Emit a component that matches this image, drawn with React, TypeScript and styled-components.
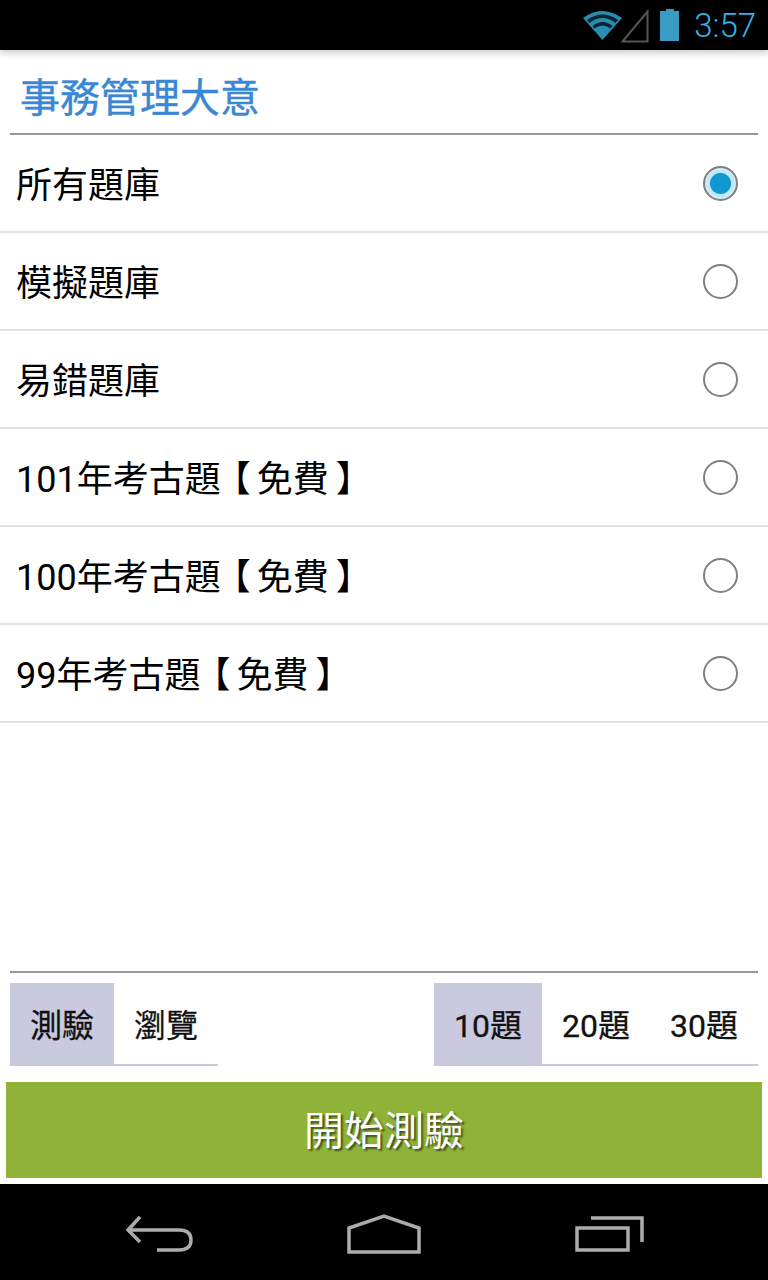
import styled, { createGlobalStyle } from 'styled-components';

const GlobalStyle = createGlobalStyle`
  html, body {
    margin: 0;
    padding: 0;
    background-color: #000;
  }

  * {
    box-sizing: border-box;
  }
`;

const BANKS = [
  { name: '所有題庫' },
  { name: '模擬題庫' },
  { name: '易錯題庫' },
  { name: '101年考古題', free: true },
  { name: '100年考古題', free: true },
  { name: '99年考古題', free: true },
];
const FONT = `Roboto, "Noto Sans CJK TC", sans-serif`;

const App = () => {
  return (
    <>
      <GlobalStyle />
      <Screen>
        <StatusBar>
          <svg width="40" height="32" viewBox="0 0 40 32">
            <path d="M0 9 Q19 -5 39 9 L19.500 31Z" fill="#2a8cb0" />
            <path d="M4 11 Q19.500 0 35 11 L32.500 14 Q19.500 4 6.500 14Z" fill="#000" opacity=".75" />
            <path d="M9.500 17 Q19.500 9 29.500 17 L27.500 19.500 Q19.500 13.500 11.500 19.500Z" fill="#000" opacity=".75" />
          </svg>
          <SignalIcon width="28" height="34" viewBox="0 0 28 34">
            <path d="M1.500 32.500 L26.500 2.500 V32.500Z" fill="none" stroke="#555" strokeWidth="2" />
          </SignalIcon>
          <svg width="22" height="32" viewBox="0 0 22 32">
            <path d="M7 0 H15 V2 H20 V32 H1 V2 H7Z" fill="#3a9cc4" />
          </svg>
          <Clock>3:57</Clock>
        </StatusBar>
        <Content>
          <Title>事務管理大意</Title>
          <Rule />
          <BankList>
            {BANKS.map(({ name, free }, i) => (
              <BankRow key={name}>
                <BankName>
                  {name}
                  {free && (
                    <>
                      <OpenBracket>【</OpenBracket>免費<CloseBracket>】</CloseBracket>
                    </>
                  )}
                </BankName>
                <Radio $checked={i === 0} />
              </BankRow>
            ))}
          </BankList>
          <Footer>
            <Rule />
            <Options>
              <Segment>
                <SegmentItem $active $width={104}>測驗</SegmentItem>
                <SegmentItem $width={104}>瀏覽</SegmentItem>
              </Segment>
              <Segment>
                <SegmentItem $active $width={108}>10題</SegmentItem>
                <SegmentItem $width={108}>20題</SegmentItem>
                <SegmentItem $width={108}>30題</SegmentItem>
              </Segment>
            </Options>
            <StartButton type="button">開始測驗</StartButton>
          </Footer>
        </Content>
        <NavBar>
          <svg width="68" height="38" viewBox="0 0 68 38">
            <path d="M15 2 L3 15 L15 27 M4 15 H54 Q66 15 66 25 Q66 35 54 35 H32" fill="none" stroke="#acacac" strokeWidth="3.500" />
          </svg>
          <svg width="74" height="40" viewBox="0 0 74 40">
            <path d="M2 38 V14 L37 2 L72 14 V38Z" fill="none" stroke="#acacac" strokeWidth="3.500" />
          </svg>
          <svg width="70" height="38" viewBox="0 0 70 38">
            <path d="M2 13 H53 V35 H2Z M16 3 H67 V27" fill="none" stroke="#acacac" strokeWidth="3.500" />
          </svg>
        </NavBar>
      </Screen>
    </>
  );
};

const Screen = styled.div`
  display: flex;
  flex-direction: column;
  width: 768px;
  height: 1280px;
  overflow: hidden;
  font-family: ${FONT};
  background-color: #fff;
`;

const StatusBar = styled.div`
  position: relative;
  z-index: 1;
  display: flex;
  align-items: center;
  justify-content: flex-end;
  height: 50px;
  padding: 0 12px 0 0;
  background-color: #000;
  box-shadow: 0 2px 8px rgba(0, 0, 0, .25);
`;

const SignalIcon = styled.svg`
  margin: 2px 10px 0 -2px;
`;

const Clock = styled.span`
  margin-left: 13px;
  font-size: 33px;
  font-weight: 300;
  color: #33b5e5;
`;

const Content = styled.div`
  flex: 1;
  display: flex;
  flex-direction: column;
  background-color: #fff;
`;

const Title = styled.h1`
  height: 83px;
  margin: 0;
  padding: 20px 0 0 20px;
  font-size: 40px;
  font-weight: 400;
  line-height: 58px;
  color: #3a87d6;
  -webkit-text-stroke: .4px #3a87d6;
`;

const Rule = styled.div`
  height: 2px;
  margin: 0 10px;
  background-color: #999;
`;

const BankList = styled.div`
  flex: 1;
`;

const BankRow = styled.div`
  display: flex;
  align-items: center;
  justify-content: space-between;
  height: 98px;
  padding: 0 30px 0 16px;
  border-bottom: 2px solid #e4e4e4;
`;

const BankName = styled.span`
  padding-bottom: 3px;
  font-size: 36px;
  white-space: nowrap;
  color: #000;
`;

const OpenBracket = styled.span`
  margin: 0 6px 0 12px;
  font-feature-settings: "halt";
`;

const CloseBracket = styled.span`
  margin-left: 7px;
  font-feature-settings: "halt";
`;

const Radio = styled.span<{ $checked?: boolean }>`
  width: 35px;
  height: 35px;
  border: 2px solid #808080;
  border-radius: 50%;
  background: ${({ $checked }) =>
    $checked ? 'radial-gradient(circle, #1296cf 0, #1296cf 10px, #bfe6f5 11px, #e6f6fc 100%)' : '#fff'};
`;

const Footer = styled.div`
  padding-bottom: 6px;
`;

const Options = styled.div`
  display: flex;
  justify-content: space-between;
  margin: 10px 10px 0;
`;

const Segment = styled.div`
  display: flex;
  height: 83px;
  border-bottom: 2px solid #c9c9dc;
`;

const SegmentItem = styled.div<{ $active?: boolean; $width: number }>`
  display: flex;
  align-items: center;
  justify-content: center;
  width: ${({ $width }) => $width}px;
  padding-bottom: 2px;
  font-size: 32px;
  color: #111;
  -webkit-text-stroke: .3px #111;
  background-color: ${({ $active }) => ($active ? '#c9c9e0' : 'transparent')};
`;

const StartButton = styled.button`
  display: block;
  width: 756px;
  height: 96px;
  margin: 16px 6px 0;
  padding: 0 0 4px;
  border: 0;
  background-color: #8fb339;
  font-family: ${FONT};
  font-size: 40px;
  color: #fff;
  text-shadow: 2px 2px 2px rgba(0, 0, 0, .55);
`;

const NavBar = styled.div`
  display: flex;
  align-items: center;
  justify-content: space-between;
  height: 96px;
  padding: 4px 123px 0 125px;
  background-color: #000;
`;

export default App;
